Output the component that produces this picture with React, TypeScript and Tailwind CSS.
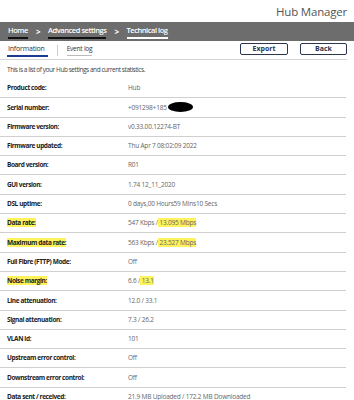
import React from "react";

type Row = { label: string; value: React.ReactNode; hl?: boolean };

const Y = ({ children }: { children: React.ReactNode }) => (
  <span className="bg-[#fff35c]">{children}</span>
);

const rows: Row[] = [
  { label: "Product code:", value: "Hub" },
  {
    label: "Serial number:",
    value: (
      <span className="flex items-center">
        +091298+185
        <span className="ml-[1px] inline-block h-[10px] w-[25px] rounded-[50%] bg-black" />
      </span>
    ),
  },
  { label: "Firmware version:", value: "v0.33.00.12274-BT" },
  { label: "Firmware updated:", value: "Thu Apr 7 08:02:09 2022" },
  { label: "Board version:", value: "R01" },
  { label: "GUI version:", value: "1.74 12_11_2020" },
  { label: "DSL uptime:", value: "0 days,00 Hours59 Mins10 Secs" },
  {
    label: "Data rate:",
    hl: true,
    value: (
      <>
        547 Kbps /<Y> 13.095 Mbps</Y>
      </>
    ),
  },
  {
    label: "Maximum data rate:",
    hl: true,
    value: (
      <>
        563 Kbps /<Y> 23.527 Mbps </Y>
      </>
    ),
  },
  { label: "Full Fibre (FTTP) Mode:", value: "Off" },
  {
    label: "Noise margin:",
    hl: true,
    value: (
      <>
        6.6 /<Y> 13.1 </Y>
      </>
    ),
  },
  { label: "Line attenuation:", value: "12.0 / 33.1" },
  { label: "Signal attenuation:", value: "7.3 / 26.2" },
  { label: "VLAN id:", value: "101" },
  { label: "Upstream error control:", value: "Off" },
  { label: "Downstream error control:", value: "Off" },
  { label: "Data sent / received:", value: "21.9 MB Uploaded / 172.2 MB Downloaded" },
];

export default function App() {
  return (
    <div
      className="w-[354px] h-[400px] overflow-hidden bg-white"
      style={{ fontFamily: '"Open Sans", "Noto Sans", sans-serif' }}
    >
      <div className="flex h-[22px] items-center justify-end pr-[7px] pt-[1px] text-[11.5px] tracking-[-0.2px] text-[#555]">
        Hub Manager
      </div>
      <div className="flex h-[19px] items-center bg-[#6d6d6d] pl-[8px] text-[7.5px] font-semibold tracking-[-0.45px] text-white">
        <span className="border-b-[2px] border-[#111] leading-[13px]">Home</span>
        <span className="mx-[8px] text-[8px] font-bold">&gt;</span>
        <span className="border-b-[2px] border-[#111] leading-[13px]">Advanced settings</span>
        <span className="mx-[8px] text-[8px] font-bold">&gt;</span>
        <span className="border-b-[2px] border-white leading-[13px]">Technical log</span>
      </div>
      <div className="mr-[7px] flex h-[19px] items-center border-b border-[#d4d4d4]">
        <div className="flex items-center pl-[7px] text-[7px] tracking-[-0.2px] text-[#333]">
          <span className="border-b-[2px] border-[#1a3d8f] pb-[2px] pl-[1px] pr-[3px] leading-[9px]">
            Information
          </span>
          <span className="mx-[9px] h-[11px] w-px bg-[#ccc]" />
          <span className="border-b border-[#bbb] pb-[2px] text-[6.5px] leading-[9px]">Event log</span>
        </div>
        <div className="ml-auto flex items-center gap-[12px] pb-[2px]">
          <button className="flex h-[12px] w-[48px] items-center justify-center rounded-[2px] border border-[#2b3550] text-[7px] font-bold text-[#2b3550]">
            Export
          </button>
          <button className="flex h-[12px] w-[47px] items-center justify-center rounded-[2px] border border-[#2b3550] text-[7px] font-bold text-[#2b3550]">
            Back
          </button>
        </div>
      </div>
      <div className="pl-[7px] pt-[5px] text-[6.5px] leading-[9px] tracking-[-0.45px] text-[#444]">
        This is a list of your Hub settings and current statistics.
      </div>
      <div className="mr-[8px] mt-[5px] flex flex-col">
        {rows.map((r, i) => (
          <div
            key={i}
            className="flex h-[19.3px] shrink-0 items-center border-b border-[#cfcfcf] text-[6.5px]"
          >
            <div className="w-[128px] shrink-0 pl-[7px] font-bold tracking-[-0.4px] text-[#222]">
              {r.hl ? <span className="bg-[#fff35c]">{r.label}</span> : r.label}
            </div>
            <div className="tracking-[-0.2px] text-[#666]">{r.value}</div>
          </div>
        ))}
      </div>
    </div>
  );
}
